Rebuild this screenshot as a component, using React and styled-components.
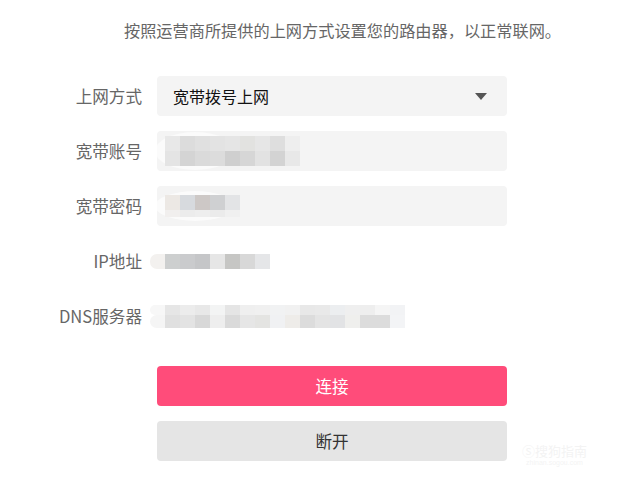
import React from "react";
import styled, { createGlobalStyle } from "styled-components";

const Global = createGlobalStyle`
  html, body { margin: 0; padding: 0; background: #fff; }
  body { font-family: "Microsoft YaHei", "Noto Sans CJK SC", "Noto Sans", sans-serif; }
`;

const Page = styled.div`
  width: 623px;
  height: 497px;
  position: relative;
  box-sizing: border-box;
  padding-top: 18px;
  overflow: hidden;
`;

const Intro = styled.p`
  margin: 0 0 0 124px;
  font-size: 16.2px;
  line-height: 24px;
  color: #666;
  white-space: nowrap;
`;

const Form = styled.div`
  margin-top: 34px;
  display: flex;
  flex-direction: column;
  gap: 15px;
`;

const Row = styled.div`
  display: flex;
  align-items: center;
  gap: 15px;
  height: 40px;
`;

const Label = styled.div`
  width: 142px;
  text-align: right;
  font-size: 16.6px;
  color: #666;
  white-space: nowrap;
  position: relative;
  z-index: 2;
`;

const Field = styled.div`
  width: 350px;
  height: 40px;
  box-sizing: border-box;
  border-radius: 4px;
  background: ${(p) => (p.$plain ? "transparent" : "#f4f4f4")};
  display: flex;
  align-items: center;
  padding-left: ${(p) => (p.$pad ?? 16)}px;
  position: relative;
`;

const SelectText = styled.span`
  font-size: 16px;
  color: #111;
  flex: 1;
`;

const Caret = styled.svg`
  width: 12px;
  height: 7px;
  margin-right: 20px;
`;

const Mosaic = styled.div`
  display: grid;
  grid-template-columns: repeat(${(p) => p.$cols}, 15px);
  grid-template-rows: ${(p) => p.$rows};
  margin-left: ${(p) => p.$shift || 0}px;
  position: relative;
  &::before {
    content: "";
    display: ${(p) => (p.$haloW ? "block" : "none")};
    position: absolute;
    left: -10px;
    top: -4px;
    width: ${(p) => p.$haloW || 0}px;
    height: calc(100% + 8px);
    border-radius: 50%;
    background: rgba(255, 255, 255, 0.6);
    z-index: 0;
  }
`;

const Cell = styled.div`
  background: ${(p) => p.$c};
  position: relative;
  z-index: 1;
  border-radius: ${(p) => (p.$round ? "7px 0 0 7px" : "0")};
`;

const Buttons = styled.div`
  margin-top: 30px;
  margin-left: 157px;
  display: flex;
  flex-direction: column;
  gap: 15px;
`;

const Button = styled.button`
  width: 350px;
  height: 40px;
  border: none;
  border-radius: 4px;
  font-family: inherit;
  font-size: 16.6px;
  cursor: pointer;
  background: ${(p) => (p.$primary ? "#ff4c7a" : "#e5e5e5")};
  color: ${(p) => (p.$primary ? "#fff" : "#333")};
  padding: 0;
`;

const Watermark = styled.div`
  position: absolute;
  left: 522px;
  top: 443px;
  color: rgba(238, 238, 238, 0.7);
  font-size: 13px;
  line-height: 16px;
  text-align: center;
  & small {
    display: block;
    font-size: 7px;
    line-height: 8px;
    font-family: "Liberation Sans", sans-serif;
  }
`;

const account = [
  ["#e8e8e8", "#dcdcdc", "#e0e0e0", "#e3e3e3", "#e5e5e5", "#e2e2e0", "#e6e6e6", "#dedede", "#eeeeee"],
  ["#e4e4e4", "#d4d4d4", "#dadada", "#dcdcdc", "#cfcfcf", "#d6d6d6", "#e2e2e2", "#d3d3d3", "#e8e8e8"],
];
const password = [
  ["#ece8e4", "#d7dade", "#cdc8c6", "#cfd0d2", "#e3e4e6"],
  ["#f1efee", "#ececec", "#eeeeee", "#ebebeb", "#f0f0f0"],
];
const ip = [["#f3f1ef", "#cdcfcf", "#cacbcd", "#c5c6c8", "#e6e6e6", "#c6c6c4", "#d8d8d8", "#e5e6e8"]];
const dns = [
  ["#f7f7f7", "#e6e6e6", "#ececec", "#e8e8e8", "#f3f4f4", "#e5e5e5", "#efefef", "#f0f0f0", "#f1f2f3", "#f1f1f1", "#e8e8e8", "#e9e9e9", "#eceef0", "#efefef", "#eeeeee", "#f5f5f5", "#f2f3f5"],
  ["#f5f5f5", "#e0e0e0", "#e3e3e3", "#d8d8d8", "#eeeeee", "#dadada", "#e6e6e6", "#e4e4e2", "#f0f1f3", "#eeece9", "#dcdcdc", "#e4e4e4", "#e2e3e5", "#efefed", "#dcdcdc", "#dcdcdc", "#f3f4f6"],
];

function Blur({ rows, rowTemplate, haloW, round, shift }) {
  return (
    <Mosaic $cols={rows[0].length} $rows={rowTemplate} $haloW={haloW} $shift={shift}>
      {rows.flatMap((r, i) =>
        r.map((c, j) => <Cell key={i + "-" + j} $c={c} $round={round && j === 0} />)
      )}
    </Mosaic>
  );
}

export default function App() {
  return (
    <>
      <Global />
      <Page>
        <Intro>按照运营商所提供的上网方式设置您的路由器，以正常联网。</Intro>
        <Form>
          <Row>
            <Label>上网方式</Label>
            <Field>
              <SelectText>宽带拨号上网</SelectText>
              <Caret viewBox="0 0 12 7">
                <path d="M0 0H12L6 7Z" fill="#555" />
              </Caret>
            </Field>
          </Row>
          <Row>
            <Label>宽带账号</Label>
            <Field $pad={8}>
              <Blur rows={account} rowTemplate="15px 15px" haloW={80} />
            </Field>
          </Row>
          <Row>
            <Label>宽带密码</Label>
            <Field $pad={8}>
              <Blur rows={password} rowTemplate="15px 7px" haloW={80} />
            </Field>
          </Row>
          <Row>
            <Label>IP地址</Label>
            <Field $plain $pad={0}>
              <Blur rows={ip} rowTemplate="15px" round shift={-7} />
            </Field>
          </Row>
          <Row>
            <Label>DNS服务器</Label>
            <Field $plain $pad={0}>
              <Blur rows={dns} rowTemplate="10px 13px" round shift={-7} />
            </Field>
          </Row>
        </Form>
        <Buttons>
          <Button $primary>连接</Button>
          <Button>断开</Button>
        </Buttons>
        <Watermark>
          Ⓢ搜狗指南
          <small>zhinan.sogou.com</small>
        </Watermark>
      </Page>
    </>
  );
}
